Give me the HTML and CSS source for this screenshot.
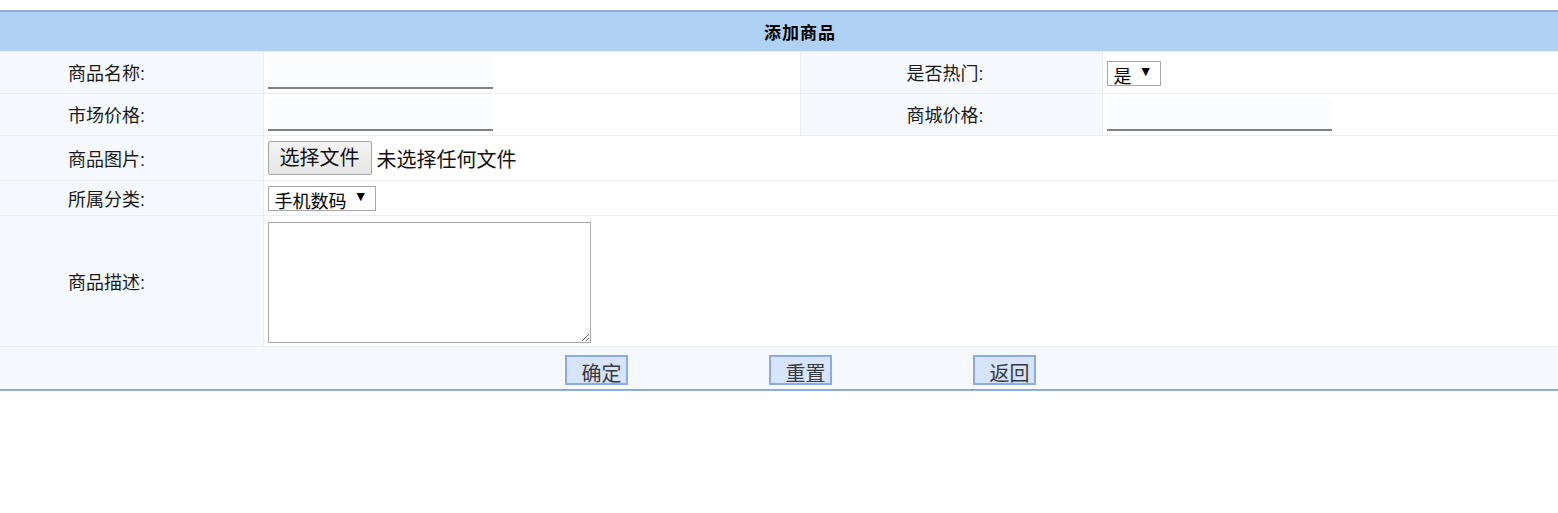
FILE: index.html
```html
<!DOCTYPE html>
<html lang="zh-CN">
<head>
  <meta charset="UTF-8">
  <meta name="viewport" content="width=device-width, initial-scale=1.0">
  <title>添加商品</title>
  <link rel="stylesheet" href="styles.css">
</head>
<body>
  <form class="product-form" action="#" method="post">
    <table class="form-table">
      <colgroup>
        <col class="col-label">
        <col class="col-value">
        <col class="col-label-right">
        <col>
      </colgroup>

      <tr class="title-row">
        <td colspan="4">添加商品</td>
      </tr>

      <tr class="field-row">
        <td class="label">商品名称:</td>
        <td class="value"><input type="text" class="text-input" name="pname"></td>
        <td class="label label-right">是否热门:</td>
        <td class="value">
          <span class="select-wrap">
            <select class="select-box select-hot" name="is_hot">
              <option value="1">是</option>
              <option value="0">否</option>
            </select>
          </span>
        </td>
      </tr>

      <tr class="field-row">
        <td class="label">市场价格:</td>
        <td class="value"><input type="text" class="text-input" name="market_price"></td>
        <td class="label label-right">商城价格:</td>
        <td class="value"><input type="text" class="text-input" name="shop_price"></td>
      </tr>

      <tr class="file-row">
        <td class="label">商品图片:</td>
        <td class="value" colspan="3">
          <label class="file-btn">选择文件<input type="file" name="upload" hidden></label>
          <span class="file-name">未选择任何文件</span>
        </td>
      </tr>

      <tr class="category-row">
        <td class="label">所属分类:</td>
        <td class="value" colspan="3">
          <span class="select-wrap">
            <select class="select-box select-category" name="cid">
              <option>手机数码</option>
              <option>电脑办公</option>
              <option>家用电器</option>
            </select>
          </span>
        </td>
      </tr>

      <tr class="desc-row">
        <td class="label">商品描述:</td>
        <td class="value" colspan="3"><textarea class="desc-input" name="pdesc"></textarea></td>
      </tr>

      <tr class="action-row">
        <td colspan="4">
          <div class="actions">
            <button type="submit" class="form-btn">确定</button>
            <button type="reset" class="form-btn">重置</button>
            <button type="button" class="form-btn">返回</button>
          </div>
        </td>
      </tr>
    </table>
  </form>
</body>
</html>
```

FILE: styles.css
```css
body {
  margin: 0;
  padding-top: 10px;
  font-family: "Liberation Sans", "Noto Sans CJK SC", sans-serif;
  font-size: 18px;
  color: #1a1a1a;
  background-color: #fff;
}

.form-table {
  width: 100%;
  border-collapse: collapse;
  table-layout: fixed;
  border-top: 2px solid #8eaadf;
  border-bottom: 2px solid #8eaadf;
}

.col-label {
  width: 263px;
}

.col-value {
  width: 537px;
}

.col-label-right {
  width: 302px;
}

.form-table td {
  padding: 0;
  border: 1px solid #e9eef3;
  vertical-align: middle;
}

.form-table td:first-child {
  border-left: none;
}

.form-table td:last-child {
  border-right: none;
}

.title-row {
  height: 40px;
}

.title-row td {
  background-color: #afd1f3;
  border-top: 2px solid #8eaadf;
  font-size: 17px;
  font-weight: bold;
  letter-spacing: 1px;
  text-align: center;
  padding-left: 42px;
  color: #000;
}

.field-row {
  height: 42px;
}

.file-row {
  height: 45px;
}

.category-row {
  height: 35px;
}

.desc-row {
  height: 131px;
}

.action-row {
  height: 44px;
}

.label {
  background-color: #f5f9fd;
  padding-left: 68px !important;
  white-space: nowrap;
}

.label-right {
  padding-left: 106px !important;
}

.value {
  background-color: #fff;
  padding-left: 4px !important;
}

.text-input {
  display: block;
  box-sizing: border-box;
  width: 225px;
  height: 33px;
  border: none;
  border-bottom: 2px solid #808080;
  background-color: #fbfcfe;
  outline: none;
  font-size: 16px;
}

.select-wrap {
  position: relative;
  display: inline-block;
  vertical-align: middle;
  margin-top: 2px;
}

.select-wrap::after {
  content: "\25BC";
  position: absolute;
  right: 8px;
  top: 2px;
  font-size: 14px;
  color: #000;
  pointer-events: none;
}

.select-box {
  display: block;
  -webkit-appearance: none;
  appearance: none;
  box-sizing: border-box;
  height: 25px;
  padding: 3px 0 0 6px;
  border: 1px solid #a9a9a9;
  border-radius: 0;
  background-color: #fff;
  font-family: "Noto Sans CJK SC", sans-serif;
  font-size: 18px;
  line-height: 21px;
  color: #000;
}

.select-hot {
  width: 54px;
}

.select-category {
  width: 108px;
}

.file-btn {
  display: inline-block;
  box-sizing: border-box;
  width: 104px;
  height: 34px;
  border: 1px solid #a6a6a6;
  border-radius: 2px;
  background: linear-gradient(#f3f3f3, #e6e6e6);
  font-size: 20px;
  line-height: 32px;
  text-align: center;
  color: #111;
  vertical-align: middle;
  cursor: pointer;
}

.file-name {
  font-size: 20px;
  vertical-align: middle;
  color: #111;
}

.desc-input {
  display: block;
  box-sizing: border-box;
  width: 323px;
  height: 121px;
  margin-top: 3px;
  border: 1px solid #a9a9a9;
  font-size: 16px;
}

.action-row td {
  background-color: #f5f9fd;
  padding-left: 42px;
}

.actions {
  display: flex;
  justify-content: center;
  gap: 141px;
  padding-top: 4px;
}

.form-btn {
  box-sizing: border-box;
  width: 63px;
  height: 30px;
  padding: 6px 0 0 15px;
  border: 2px solid #8eaadf;
  background-color: #d6e4fc;
  font-family: "Noto Sans CJK SC", sans-serif;
  font-size: 20px;
  line-height: 20px;
  text-align: left;
  color: #3a3a3a;
  cursor: pointer;
}
```
